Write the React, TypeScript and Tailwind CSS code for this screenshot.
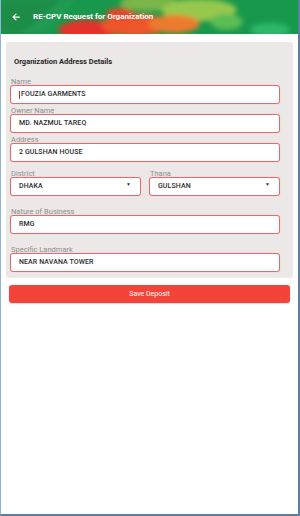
import React from 'react';

const font = { fontFamily: 'Roboto, "Liberation Sans", sans-serif' };

function HeaderArt() {
  return (
    <svg className="absolute inset-0 h-full w-full" viewBox="0 0 300 34" preserveAspectRatio="none">
      <defs>
        <filter id="blur" x="-50%" y="-50%" width="200%" height="200%">
          <feGaussianBlur stdDeviation="2.5" />
        </filter>
      </defs>
      <rect width="300" height="34" fill="#18984c" />
      <g filter="url(#blur)">
        <path d="M0 0 L70 0 L40 34 L0 34 Z" fill="#1d8c46" />
        <path d="M20 34 L60 0 L75 0 L40 34 Z" fill="#2aa458" opacity="0.6" />
        <ellipse cx="150" cy="3" rx="30" ry="8" fill="#7ab648" />
        <ellipse cx="200" cy="10" rx="38" ry="11" fill="#97c74d" />
        <ellipse cx="88" cy="30" rx="30" ry="10" fill="#e4302a" />
        <ellipse cx="135" cy="25" rx="34" ry="11" fill="#ef5529" />
        <ellipse cx="175" cy="24" rx="26" ry="9" fill="#ee7a2e" />
        <ellipse cx="120" cy="14" rx="14" ry="6" fill="#e8452a" />
        <ellipse cx="228" cy="22" rx="16" ry="8" fill="#5cbd55" />
        <ellipse cx="272" cy="30" rx="20" ry="7" fill="#2db869" />
      </g>
    </svg>
  );
}

function Field({ label, value, caret, select }: { label: string; value: string; caret?: boolean; select?: boolean }) {
  return (
    <div className="flex flex-col">
      <div className="h-[10px] flex items-end pl-[1px] text-[7.5px] leading-none text-[#8d8d8d]">{label}</div>
      <div className="h-[19px] flex items-center rounded-[3px] border border-[#e36b6b] bg-white pl-[8px] pr-[9px] shadow-[0_0_1px_#f0a0a0]">
        {caret && <span className="mr-[1px] h-[8px] w-[1px] bg-[#d32f2f]" />}
        <span className="flex-1 text-[7px] font-medium text-[#2b2b2b] tracking-[0.1px]">{value}</span>
        {select && <span className="mb-[3px] text-[5px] text-[#333]">▼</span>}
      </div>
    </div>
  );
}

export default function App() {
  return (
    <div className="w-[300px] h-[516px] flex flex-col bg-white border-l border-l-[#8fb3da] border-r-2 border-r-[#5b7ea3] border-b-2 border-b-[#5b7ea3]" style={font}>
      <header className="relative h-[34px] shrink-0 overflow-hidden">
        <HeaderArt />
        <div className="relative flex h-full items-center pl-[10px] gap-[12px] text-white">
          <svg width="10" height="10" viewBox="0 0 24 24" fill="none" stroke="white" strokeWidth="3" strokeLinecap="round" strokeLinejoin="round">
            <path d="M20 12H5M12 5l-7 7 7 7" />
          </svg>
          <span className="text-[8px] font-bold">RE-CPV Request for Organization</span>
        </div>
      </header>

      <main className="flex flex-col pt-[8px]">
        <section className="ml-[5px] w-[287px] rounded-[3px] bg-[#ece8e7] pl-[4px] pr-[13px] pt-[15px] pb-[5px] shadow-[0_1px_1px_rgba(0,0,0,0.08)]">
          <h2 className="pl-[4px] text-[7.5px] font-bold leading-[10px] text-[#1f1f1f]">Organization Address Details</h2>
          <div className="mt-[8px] flex flex-col">
            <Field label="Name" value="FOUZIA GARMENTS" caret />
            <Field label="Owner Name" value="MD. NAZMUL TAREQ" />
            <Field label="Address" value="2 GULSHAN HOUSE" />
            <div className="mt-[5px] grid grid-cols-2 gap-[8px]">
              <Field label="District" value="DHAKA" select />
              <Field label="Thana" value="GULSHAN" select />
            </div>
            <div className="mt-[9px]">
              <Field label="Nature of Business" value="RMG" />
            </div>
            <div className="mt-[9px]">
              <Field label="Specific Landmark" value="NEAR NAVANA TOWER" />
            </div>
          </div>
        </section>

        <button className="ml-[8px] mt-[8px] h-[18px] w-[281px] rounded-[3px] bg-[#f4443a] text-[7px] text-white shadow-[0_1px_1px_rgba(0,0,0,0.15)]">
          Save Deposit
        </button>
      </main>
    </div>
  );
}
